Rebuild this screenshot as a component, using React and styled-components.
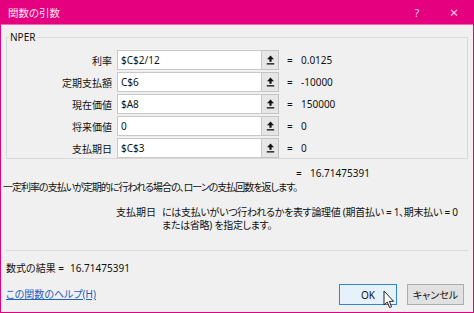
import React from "react";
import styled, { createGlobalStyle } from "styled-components";

const Global = createGlobalStyle`
  html, body { margin: 0; padding: 0; background: #f0f0f0; }
  body {
    font-family: "Noto Sans", "Noto Sans CJK JP", sans-serif;
    font-size: 10px;
    color: #111;
    font-feature-settings: "palt";
  }
`;

const Window = styled.div`
  width: 474px;
  height: 313px;
  box-sizing: border-box;
  border: 1px solid #e4007f;
  border-top: none;
  background: #f0f0f0;
  display: flex;
  flex-direction: column;
  overflow: hidden;
`;

const TitleBar = styled.div`
  height: 25px;
  margin: 0 -1px;
  background: #e4007f;
  display: flex;
  align-items: center;
  padding: 0 0 0 8px;
  color: #fbe3f0;
  font-size: 10.5px;
  box-shadow: inset 0 -1px 0 #ef6cb3;
`;

const Title = styled.div`
  flex: 1;
`;

const TitleButton = styled.div`
  width: ${(p) => p.$w}px;
  text-align: center;
  font-size: ${(p) => p.$size}px;
  color: #f6cde3;
  line-height: 25px;
`;

const Body = styled.div`
  flex: 1;
  display: flex;
  flex-direction: column;
  padding: 0 5px;
`;

const Group = styled.fieldset`
  margin: 6px 0 0;
  padding: 6px 0 0;
  border: 1px solid #d9d9d9;
  display: flex;
  flex-direction: column;
  gap: 2px;
`;

const Legend = styled.legend`
  margin-left: 2px;
  padding: 0 1px;
  line-height: 13px;
  font-size: 10px;
`;

const Row = styled.div`
  display: flex;
  align-items: center;
  height: 20px;
`;

const Label = styled.div`
  width: 110px;
  text-align: right;
  padding-right: 5px;
  box-sizing: border-box;
`;

const InputBox = styled.div`
  width: 145px;
  height: 20px;
  box-sizing: border-box;
  background: #fff;
  border: 1px solid #c9c9c9;
  padding: 0 3px;
  display: flex;
  align-items: center;
`;

const RefButton = styled.div`
  width: 17px;
  height: 20px;
  box-sizing: border-box;
  background: #e6e6e6;
  border: 1px solid #c3c3c3;
  border-left: none;
  display: flex;
  align-items: center;
  justify-content: center;
`;

const Eq = styled.div`
  width: 22px;
  padding-left: 8px;
  box-sizing: border-box;
`;

const Value = styled.div``;

const ResultLine = styled.div`
  display: flex;
  margin-top: 8px;
  padding-left: 282px;
  line-height: 13px;
`;

const Desc = styled.div`
  margin: 1px -3px 0;
  line-height: 13px;
  letter-spacing: -1px;
  white-space: nowrap;
`;

const ArgDesc = styled.div`
  display: flex;
  margin-top: 12px;
  line-height: 13px;
`;

const ArgName = styled.div`
  width: 156px;
  text-align: right;
  padding-right: 6px;
  box-sizing: border-box;
`;

const ArgText = styled.div`
  flex: 1;
  white-space: nowrap;
  letter-spacing: -0.3px;
`;

const Separator = styled.div`
  margin-top: auto;
  height: 1px;
  background: #dadada;
`;

const FormulaResult = styled.div`
  margin-top: 11px;
  line-height: 13px;
  display: flex;
  gap: 6px;
`;

const Footer = styled.div`
  display: flex;
  align-items: center;
  margin: 9px 4px 7px 0;
`;

const HelpLink = styled.a`
  flex: 1;
  color: #1f5fbf;
  text-decoration: underline;
  line-height: 13px;
`;

const Button = styled.div`
  position: relative;
  width: ${(p) => p.$w}px;
  height: 21px;
  box-sizing: border-box;
  margin-left: ${(p) => p.$ml || 0}px;
  display: flex;
  align-items: center;
  justify-content: center;
  background: ${(p) => (p.$primary ? "#e5f1fb" : "#e1e1e1")};
  border: 1px solid ${(p) => (p.$primary ? "#2f86d6" : "#adadad")};
`;

const Cursor = styled.svg`
  position: absolute;
  left: 43px;
  top: 5px;
`;

const RefIcon = () => (
  <svg width="9" height="10" viewBox="0 0 9 10">
    <polygon points="4.5,0.5 8,4.2 5.6,4.2 5.6,6.8 3.4,6.8 3.4,4.2 1,4.2" fill="#111" />
    <rect x="0.8" y="8.2" width="7.4" height="1.3" fill="#111" />
  </svg>
);

const args = [
  { label: "利率", input: "$C$2/12", value: "0.0125" },
  { label: "定期支払額", input: "C$6", value: "-10000" },
  { label: "現在価値", input: "$A8", value: "150000" },
  { label: "将来価値", input: "0", value: "0" },
  { label: "支払期日", input: "$C$3", value: "0" },
];

export default function App() {
  return (
    <>
      <Global />
      <Window>
        <TitleBar>
          <Title>関数の引数</Title>
          <TitleButton $w={34} $size={11}>?</TitleButton>
          <TitleButton $w={40} $size={15}>×</TitleButton>
        </TitleBar>
        <Body>
          <Group>
            <Legend>NPER</Legend>
            {args.map((a) => (
              <Row key={a.label}>
                <Label>{a.label}</Label>
                <InputBox>{a.input}</InputBox>
                <RefButton>
                  <RefIcon />
                </RefButton>
                <Eq>=</Eq>
                <Value>{a.value}</Value>
              </Row>
            ))}
          </Group>
          <ResultLine>
            <Eq>=</Eq>
            <Value>16.71475391</Value>
          </ResultLine>
          <Desc>一定利率の支払いが定期的に行われる場合の、ローンの支払回数を返します。</Desc>
          <ArgDesc>
            <ArgName>支払期日</ArgName>
            <ArgText>
              には支払いがいつ行われるかを表す論理値 (期首払い = 1、期末払い = 0
              <br />
              または省略) を指定します。
            </ArgText>
          </ArgDesc>
          <Separator />
          <FormulaResult>
            <span>数式の結果 =</span>
            <span>16.71475391</span>
          </FormulaResult>
          <Footer>
            <HelpLink>この関数のヘルプ(H)</HelpLink>
            <Button $primary $w={58}>
              OK
              <Cursor width="12" height="19" viewBox="0 0 12 19">
                <path
                  d="M1 1 L1 15 L4.2 12 L6.6 17.6 L8.6 16.7 L6.3 11.3 L10.6 11.3 Z"
                  fill="#fff"
                  stroke="#222"
                  strokeWidth="1"
                  strokeLinejoin="round"
                />
              </Cursor>
            </Button>
            <Button $w={57} $ml={10}>
              キャンセル
            </Button>
          </Footer>
        </Body>
      </Window>
    </>
  );
}
